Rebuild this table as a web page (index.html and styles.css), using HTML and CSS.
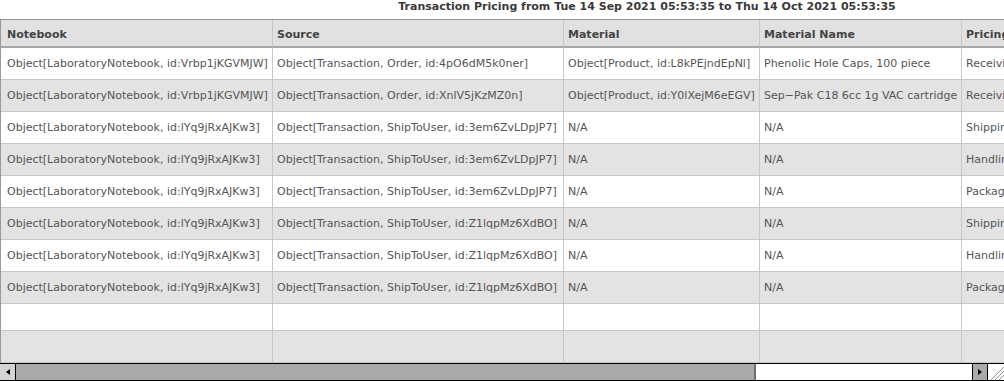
FILE: index.html
```html
<!DOCTYPE html>
<html>
<head>
<meta charset="utf-8">
<link rel="stylesheet" href="styles.css">
</head>
<body>
<div class="view">
  <div class="title">Transaction Pricing from Tue 14 Sep 2021 05:53:35 to Thu 14 Oct 2021 05:53:35</div>
  <div class="grid-wrap">
    <table class="grid">
      <colgroup>
        <col class="c1"><col class="c2"><col class="c3"><col class="c4"><col class="c5">
      </colgroup>
      <thead>
        <tr><th>Notebook</th><th>Source</th><th>Material</th><th>Material Name</th><th>Pricing Type</th></tr>
      </thead>
      <tbody>
        <tr><td>Object[LaboratoryNotebook, id:Vrbp1jKGVMJW]</td><td>Object[Transaction, Order, id:4pO6dM5k0ner]</td><td>Object[Product, id:L8kPEjndEpNl]</td><td>Phenolic Hole Caps, 100 piece</td><td>Receiving</td></tr>
        <tr><td>Object[LaboratoryNotebook, id:Vrbp1jKGVMJW]</td><td>Object[Transaction, Order, id:XnlV5jKzMZ0n]</td><td>Object[Product, id:Y0lXejM6eEGV]</td><td>Sep−Pak C18 6cc 1g VAC cartridge</td><td>Receiving</td></tr>
        <tr><td>Object[LaboratoryNotebook, id:lYq9jRxAJKw3]</td><td>Object[Transaction, ShipToUser, id:3em6ZvLDpJP7]</td><td>N/A</td><td>N/A</td><td>Shipping</td></tr>
        <tr><td>Object[LaboratoryNotebook, id:lYq9jRxAJKw3]</td><td>Object[Transaction, ShipToUser, id:3em6ZvLDpJP7]</td><td>N/A</td><td>N/A</td><td>Handling</td></tr>
        <tr><td>Object[LaboratoryNotebook, id:lYq9jRxAJKw3]</td><td>Object[Transaction, ShipToUser, id:3em6ZvLDpJP7]</td><td>N/A</td><td>N/A</td><td>Packaging</td></tr>
        <tr><td>Object[LaboratoryNotebook, id:lYq9jRxAJKw3]</td><td>Object[Transaction, ShipToUser, id:Z1lqpMz6XdBO]</td><td>N/A</td><td>N/A</td><td>Shipping</td></tr>
        <tr><td>Object[LaboratoryNotebook, id:lYq9jRxAJKw3]</td><td>Object[Transaction, ShipToUser, id:Z1lqpMz6XdBO]</td><td>N/A</td><td>N/A</td><td>Handling</td></tr>
        <tr><td>Object[LaboratoryNotebook, id:lYq9jRxAJKw3]</td><td>Object[Transaction, ShipToUser, id:Z1lqpMz6XdBO]</td><td>N/A</td><td>N/A</td><td>Packaging</td></tr>
        <tr class="empty short"><td></td><td></td><td></td><td></td><td></td></tr>
        <tr class="empty"><td></td><td></td><td></td><td></td><td></td></tr>
      </tbody>
    </table>
  </div>
  <div class="hscroll">
    <div class="sb-btn sb-left"><svg width="8" height="8" viewBox="0 0 8 8"><path d="M6 1 L2 4 L6 7 Z" fill="#000"/></svg></div>
    <div class="sb-thumb"></div>
    <div class="sb-track"></div>
    <div class="sb-btn sb-right"><svg width="8" height="8" viewBox="0 0 8 8"><path d="M2 1 L6 4 L2 7 Z" fill="#000"/></svg></div>
    <div class="sb-corner"><svg width="16" height="16" viewBox="0 0 16 16"><path d="M16 3 L3 16 M16 7 L7 16 M16 11 L11 16" stroke="#999" stroke-width="1"/></svg></div>
  </div>
</div>
</body>
</html>
```
FILE: styles.css
```css
html, body {
  margin: 0;
  padding: 0;
  background: #fff;
  overflow: hidden;
}
.view {
  width: 1004px;
  height: 381px;
  overflow: hidden;
  font-family: "DejaVu Sans", sans-serif;
  font-size: 11px;
  color: #555;
}
.title {
  width: 1294px;
  text-align: center;
  font-weight: bold;
  color: #3a3a3a;
  height: 19px;
  line-height: 13px;
}
.grid-wrap {
  height: 344px;
  overflow: hidden;
  border-left: 1px solid #999;
}
.grid {
  border-collapse: separate;
  border-spacing: 0;
  table-layout: fixed;
  width: 1293px;
  border-top: 1px solid #999;
}
.c1 { width: 272px; }
.c2 { width: 291px; }
.c3 { width: 196px; }
.c4 { width: 202px; }
.c5 { width: 332px; }
.grid th, .grid td {
  padding: 0 0 0 4px;
  white-space: nowrap;
  overflow: hidden;
  text-align: left;
  border-right: 1px solid #c8c8c8;
}
.grid th:first-child, .grid td:first-child {
  padding-left: 6px;
}
.grid th {
  background: #e1e1e1;
  color: #444;
  font-weight: bold;
  height: 26px;
  padding-top: 3px;
  line-height: 23px;
  box-sizing: border-box;
  border-bottom: 2px solid #a8a8a8;
}
.grid td {
  height: 31px;
  line-height: 31px;
  border-bottom: 1px solid #c8c8c8;
}
.grid tbody tr:nth-child(even) td {
  background: #e3e3e3;
}
.grid tr.short td {
  height: 26px;
  line-height: 26px;
}
.hscroll {
  display: flex;
  height: 16px;
  border-top: 1px solid #000;
  border-bottom: 1px solid #000;
}
.sb-btn {
  width: 16px;
  display: flex;
  align-items: center;
  justify-content: center;
  box-sizing: border-box;
}
.sb-left {
  background: #d4d4d4;
  border-right: 1px solid #000;
}
.sb-right {
  background: #aaa;
  border-left: 1px solid #000;
  border-right: 1px solid #000;
}
.sb-thumb {
  width: 738px;
  background: #aaa;
  border-right: 2px solid #6f6f6f;
}
.sb-track {
  flex: 1;
  background: #fff;
}
.sb-corner {
  width: 16px;
  background: #fff;
  line-height: 0;
}
```
